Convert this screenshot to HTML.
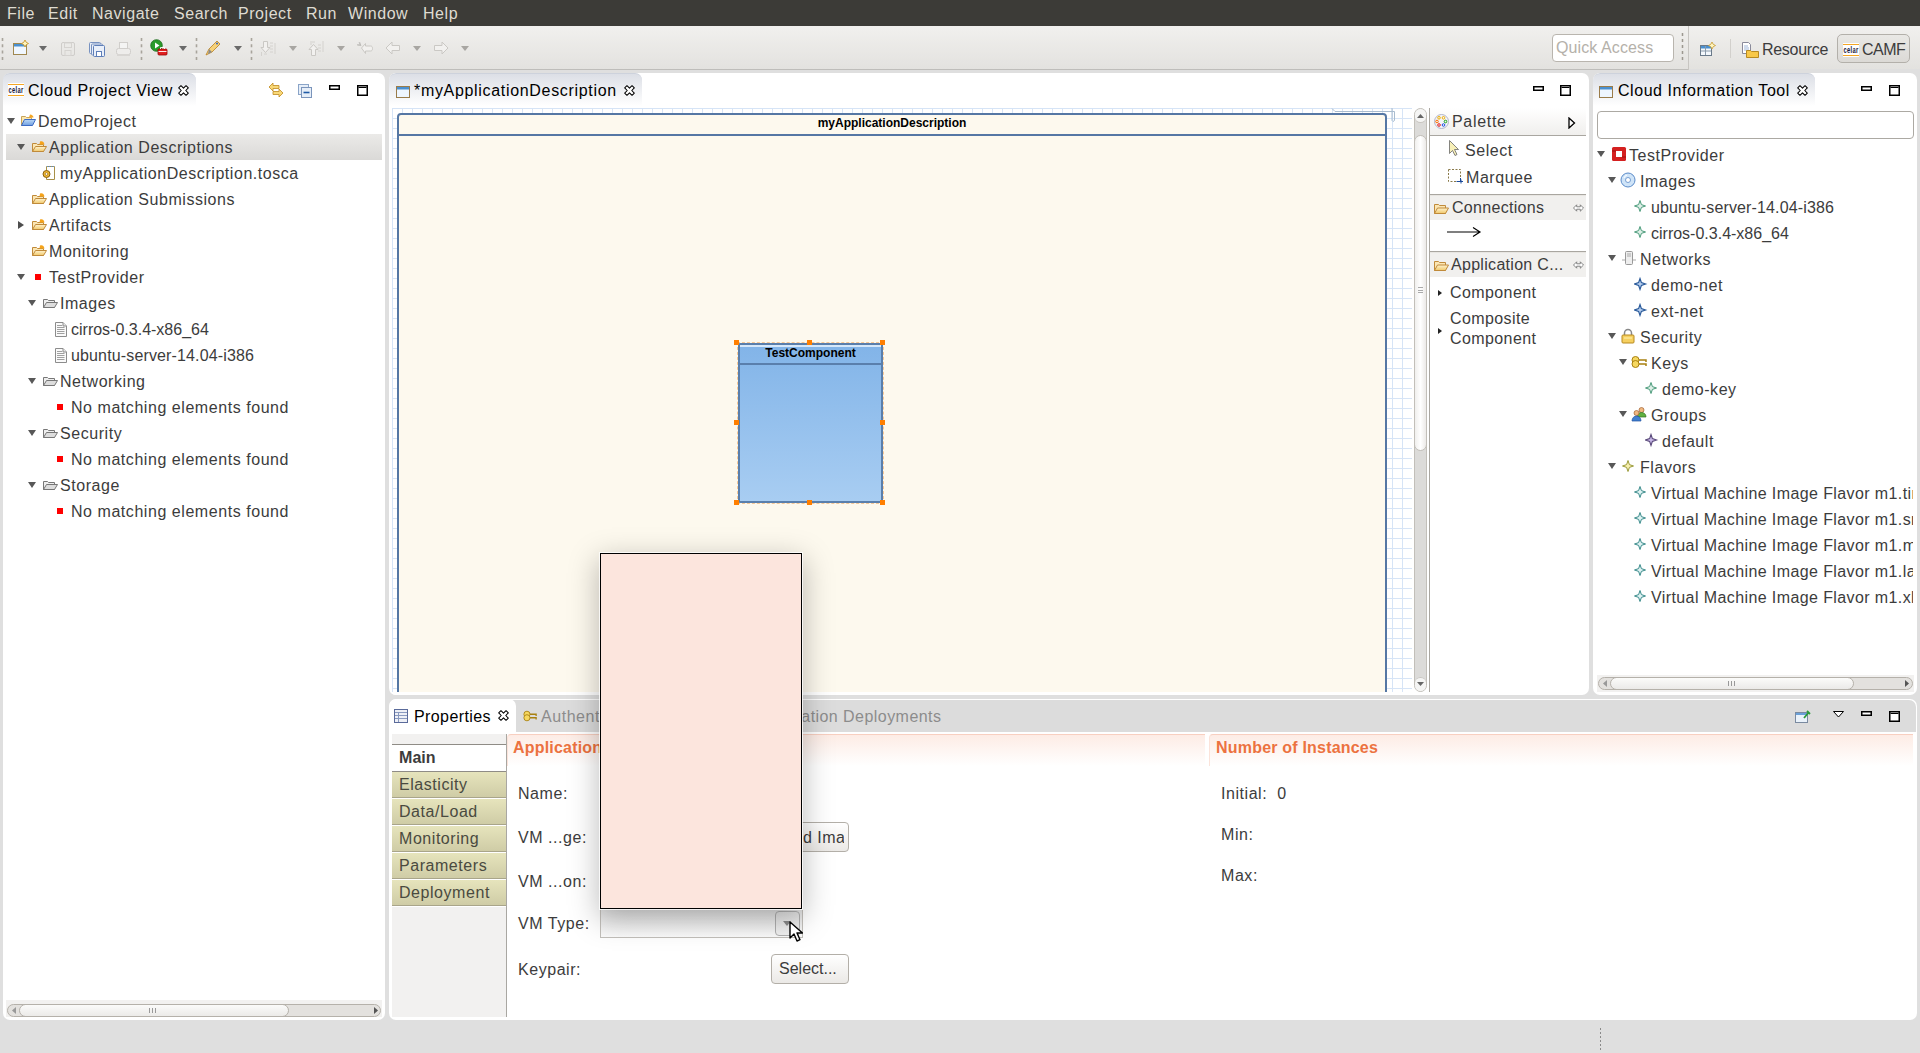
<!DOCTYPE html>
<html><head><meta charset="utf-8">
<style>
*{box-sizing:border-box;margin:0;padding:0}
html,body{width:1920px;height:1053px;overflow:hidden}
body{position:relative;background:#dfdfdf;font-family:"Liberation Sans",sans-serif;font-size:16px;letter-spacing:0.55px;color:#3c3c3c}
.a{position:absolute}
.t{position:absolute;white-space:nowrap;line-height:20px}
#menubar{left:0;top:0;width:1920px;height:26px;background:#3c3b37}
#menubar span{position:absolute;top:4px;color:#dfdbd2;line-height:20px}
#toolbar{left:0;top:26px;width:1920px;height:44px;background:linear-gradient(#f1f0ee,#e3e2df);border-bottom:1px solid #bebdba}
.panel{position:absolute;background:#fff;border-radius:7px}
.tabhdr{position:absolute;left:0;top:0;height:35px;border-radius:7px 7px 0 0;background:linear-gradient(#dcdfe6,#fff);border-top:1px solid #cdd2dc}
.tree .t{color:#3c3c3c}
.tw{position:absolute;width:0;height:0;border-left:5px solid transparent;border-right:5px solid transparent;border-top:8px solid #4a4a4a}
.tr{position:absolute;width:0;height:0;border-top:5px solid transparent;border-bottom:5px solid transparent;border-left:8px solid #4a4a4a}
.minbtn{position:absolute;width:11px;height:5px;border:2px solid #000}
.maxbtn{position:absolute;width:11px;height:11px;border:2px solid #000;border-top-width:3px}
</style></head><body>
<svg width="0" height="0" style="position:absolute">
<defs>
<linearGradient id="gy" x1="0" y1="0" x2="0" y2="1"><stop offset="0" stop-color="#fff3cf"/><stop offset="1" stop-color="#f0c86a"/></linearGradient>
<linearGradient id="gb" x1="0" y1="0" x2="0" y2="1"><stop offset="0" stop-color="#bcd8f6"/><stop offset="1" stop-color="#6f9fe0"/></linearGradient>
<symbol id="i-projfolder" viewBox="0 0 16 16"><path d="M1.5 3.5h4l1 1h5v8h-10z" fill="#fbe7b0" stroke="#c9a55a"/><path d="M10 1.5c2 0 3.5 1.5 3.5 3H9z" fill="#f5a623"/><path d="M1.5 12.5l3-6h11l-3 6z" fill="url(#gb)" stroke="#3d6bc4"/></symbol>
<symbol id="i-yfolder" viewBox="0 0 16 16"><path d="M1.5 4.5h4l1 1h6v7h-11z" fill="#fbe6b4" stroke="#c08a3a"/><path d="M9 2.5c2-1 4 0 4.5 3H8.5z" fill="#f5a31a"/><path d="M1.5 12.5l3-5h11l-3 5z" fill="url(#gy)" stroke="#c08a3a"/></symbol>
<symbol id="i-pfolder" viewBox="0 0 16 16"><path d="M1.5 3.5h4l1 1h6v8h-11z" fill="#fbe6b4" stroke="#c08a3a"/><path d="M1.5 12.5l3-5.5h11l-3 5.5z" fill="url(#gy)" stroke="#c08a3a"/></symbol>
<symbol id="i-gfolder" viewBox="0 0 16 16"><path d="M1.5 4.5h4l1 1h6v7h-11z" fill="#eee" stroke="#777"/><path d="M1.5 12.5l3-5h11l-3 5z" fill="#ddd" stroke="#777"/></symbol>
<symbol id="i-file" viewBox="0 0 16 16"><path d="M.5 1.5h7.5l3.5 3.5v10.5H.5z" fill="#fafafa" stroke="#8c8c8c"/><path d="M8 1.5v3.5h3.5" fill="#e8e8e8" stroke="#8c8c8c"/><path d="M2 4.5h5M2 6.5h7.5M2 8.5h7.5M2 10.5h7.5M2 12.5h7.5" stroke="#a0a0a0" stroke-width="1"/></symbol>
<symbol id="i-tosca" viewBox="0 0 16 16"><path d="M4.5 1.5h8v13h-8z" fill="#fff" stroke="#a89048"/><path d="M5 1.5h7" stroke="#5a8fd0" stroke-dasharray="1 1"/><circle cx="4.5" cy="9" r="3.5" fill="#f0b830" stroke="#8a6010"/><circle cx="4.5" cy="9" r="1.3" fill="#fff" stroke="#8a6010" stroke-width=".6"/></symbol>
</defs></svg>
<svg width="0" height="0" style="position:absolute"><defs>
<symbol id="i-celar" viewBox="0 0 16 14"><rect x="0" y="0" width="16" height="14" fill="#fff"/><path d="M0 1.5h16M0 12.5h16" stroke="#f5a623" stroke-width="1"/><text x="0.5" y="10" font-family="Liberation Sans" font-size="9.5" font-weight="bold" textLength="15" lengthAdjust="spacingAndGlyphs" fill="#14143a">celar</text></symbol>
<symbol id="i-close" viewBox="0 0 11 11"><path d="M.7 2.96L2.96.7 5.5 3.24 8.04.7 10.3 2.96 7.76 5.5 10.3 8.04 8.04 10.3 5.5 7.76 2.96 10.3 .7 8.04 3.24 5.5z" fill="#fff" stroke="#000" stroke-width="1.05" stroke-linejoin="round"/></symbol>
<symbol id="i-min" viewBox="0 0 11 5"><rect x=".75" y=".75" width="9.5" height="3.5" fill="#fff" stroke="#000" stroke-width="1.5"/></symbol>
<symbol id="i-max" viewBox="0 0 11 11"><rect x=".75" y=".75" width="9.5" height="9.5" fill="#fff" stroke="#000" stroke-width="1.5"/><path d="M1.5 2.5h8" stroke="#000" stroke-width="1"/></symbol>
<symbol id="i-sync" viewBox="0 0 16 16"><path d="M1 5l4-4v2.5h6v3H5V9z" fill="#f8d878" stroke="#c08a20" stroke-width=".8"/><path d="M15 11l-4-4v2.5H5v3h6V15z" fill="#f8d878" stroke="#c08a20" stroke-width=".8"/></symbol>
<symbol id="i-collapse" viewBox="0 0 14 14"><rect x=".5" y=".5" width="10" height="10" fill="#e6eef8" stroke="#8aa4c8"/><rect x="3.5" y="3.5" width="10" height="10" fill="#e6eef8" stroke="#7a94bb"/><path d="M5.5 8.5h6" stroke="#1f5aa6" stroke-width="1.6"/></symbol>
<symbol id="i-win" viewBox="0 0 14 12"><rect x=".5" y=".5" width="13" height="11" fill="#eef6ff" stroke="#9a7c4a"/><rect x="1" y="1" width="12" height="2.5" fill="#4a90d0"/></symbol>
</defs></svg>
<svg width="0" height="0" style="position:absolute"><defs>
<symbol id="i-os" viewBox="0 0 16 16"><rect x="1" y="1" width="14" height="14" rx="1.5" fill="#d42020"/><rect x="5" y="5" width="6" height="6" fill="#fff"/><path d="M1 5h4M11 11h4" stroke="#a01010"/></symbol>
<symbol id="i-disc" viewBox="0 0 16 16"><circle cx="8" cy="8" r="7" fill="#cfe4f8" stroke="#5a8ac8"/><circle cx="8" cy="8" r="2.5" fill="#fff" stroke="#5a8ac8" stroke-width=".8"/><path d="M4 6a4.5 4.5 0 0 1 3-3" stroke="#fff" fill="none"/></symbol>
<symbol id="i-net" viewBox="0 0 16 16"><rect x="4.5" y="1.5" width="7" height="13" rx="1" fill="#eee" stroke="#999"/><path d="M6 4h4M6 6h4M1 10h3M12 10h3" stroke="#aaa"/></symbol>
<symbol id="i-lock" viewBox="0 0 16 16"><path d="M4.5 7V5a3.5 3.5 0 0 1 7 0v2" fill="none" stroke="#888" stroke-width="1.5"/><rect x="2" y="7" width="12" height="8" rx="1" fill="#f6d060" stroke="#b88a20"/><path d="M4 10h8" stroke="#fff2b0"/></symbol>
<symbol id="i-keys" viewBox="0 0 16 16"><circle cx="4.5" cy="6" r="3.5" fill="#f6d860" stroke="#a88010"/><circle cx="4.5" cy="10" r="3.5" fill="#f6d860" stroke="#a88010"/><path d="M8 6h7v2M8 10h7v2" stroke="#a88010" stroke-width="1.5" fill="none"/></symbol>
<symbol id="i-groups" viewBox="0 0 16 16"><circle cx="10.5" cy="4" r="2.5" fill="#f0b880" stroke="#a06030" stroke-width=".7"/><path d="M6 11c0-3 2-4.5 4.5-4.5S15 8 15 11z" fill="#60b040" stroke="#307020" stroke-width=".7"/><circle cx="5.5" cy="7" r="2.5" fill="#f0b880" stroke="#a06030" stroke-width=".7"/><path d="M1 15c0-3 2-5 4.5-5S10 12 10 15z" fill="#4080d0" stroke="#2050a0" stroke-width=".7"/></symbol>
<symbol id="i-spk-g" viewBox="0 0 16 16"><path d="M6 2.5l1.4 4.1 4.1 1.4-4.1 1.4L6 13.5l-1.4-4.1L.5 8l4.1-1.4z" fill="#dff0e8" stroke="#4a9a7a"/></symbol>
<symbol id="i-spk-b" viewBox="0 0 16 16"><path d="M6 2.5l1.4 4.1 4.1 1.4-4.1 1.4L6 13.5l-1.4-4.1L.5 8l4.1-1.4z" fill="#b8d0f0" stroke="#2a5a9a" stroke-width="1.2"/></symbol>
<symbol id="i-spk-p" viewBox="0 0 16 16"><path d="M6 2.5l1.4 4.1 4.1 1.4-4.1 1.4L6 13.5l-1.4-4.1L.5 8l4.1-1.4z" fill="#c8b8e8" stroke="#5a4a7a" stroke-width="1.1"/></symbol>
<symbol id="i-spk-y" viewBox="0 0 16 16"><path d="M6 2.5l1.4 4.1 4.1 1.4-4.1 1.4L6 13.5l-1.4-4.1L.5 8l4.1-1.4z" fill="#f8f0b0" stroke="#9a9a3a"/></symbol>
<symbol id="i-spk-t" viewBox="0 0 16 16"><path d="M6 2.5l1.4 4.1 4.1 1.4-4.1 1.4L6 13.5l-1.4-4.1L.5 8l4.1-1.4z" fill="#e0f4f4" stroke="#3a8a8a"/></symbol>
</defs></svg>

<div id="menubar" class="a">
<span style="left:7px">File</span><span style="left:48px">Edit</span><span style="left:92px">Navigate</span><span style="left:174px">Search</span><span style="left:238px">Project</span><span style="left:306px">Run</span><span style="left:348px">Window</span><span style="left:423px">Help</span>
</div>
<div id="toolbar" class="a">
<svg class="a" style="left:1px;top:12px" width="3" height="22"><path d="M1.5 0v22" stroke="#a8a49c" stroke-width="1.6" stroke-dasharray="3 3.3"/></svg>
<svg class="a" style="left:140px;top:12px" width="3" height="22"><path d="M1.5 0v22" stroke="#a8a49c" stroke-width="1.6" stroke-dasharray="3 3.3"/></svg>
<svg class="a" style="left:195px;top:12px" width="3" height="22"><path d="M1.5 0v22" stroke="#a8a49c" stroke-width="1.6" stroke-dasharray="3 3.3"/></svg>
<svg class="a" style="left:250px;top:12px" width="3" height="22"><path d="M1.5 0v22" stroke="#a8a49c" stroke-width="1.6" stroke-dasharray="3 3.3"/></svg>
<!-- new -->
<svg class="a" style="left:12px;top:14px" width="17" height="16"><rect x="1.5" y="3.5" width="13" height="11" fill="#f0f7ff" stroke="#a08850"/><rect x="2" y="4" width="12" height="2.5" fill="#4a90d0"/><path d="M13 0l1.2 2.3 2.3 1.2-2.3 1.2L13 7l-1.2-2.3L9.5 3.5l2.3-1.2z" fill="#fff6c0" stroke="#c89a30" stroke-width=".9"/></svg>
<svg class="a" style="left:39px;top:20px" width="8" height="5"><path d="M0 0h8L4 5z" fill="#6a6a6a"/></svg>
<!-- save disabled -->
<svg class="a" style="left:60px;top:15px" width="16" height="16"><rect x="1.5" y="1.5" width="13" height="13" rx="1.5" fill="none" stroke="#cfcdca"/><rect x="4.5" y="2" width="7" height="4.5" fill="none" stroke="#d5d3d0"/><rect x="5" y="9.5" width="6" height="5" fill="none" stroke="#d5d3d0"/></svg>
<!-- save all -->
<svg class="a" style="left:88px;top:15px" width="17" height="16"><rect x="1.5" y="1.5" width="11" height="11" rx="1" fill="#e8eef8" stroke="#7892c0"/><rect x="3.5" y="3" width="11" height="11" rx="1" fill="#e8eef8" stroke="#7892c0"/><rect x="5.5" y="4.5" width="11" height="11" rx="1" fill="#eaf0fa" stroke="#5f7fb8"/><rect x="8.5" y="10.5" width="5" height="5" fill="#fff" stroke="#5f7fb8"/></svg>
<!-- print disabled -->
<svg class="a" style="left:115px;top:15px" width="17" height="16"><rect x="4.5" y="1.5" width="8" height="7" fill="#f4f4f3" stroke="#d0cecb"/><rect x="1.5" y="7.5" width="14" height="6" rx="2" fill="#eeedeb" stroke="#d0cecb"/><rect x="2" y="13" width="13" height="2" fill="#d8d6d3"/></svg>
<!-- run ext -->
<svg class="a" style="left:150px;top:13px" width="18" height="17"><circle cx="6.5" cy="6.5" r="5.8" fill="#2a9a2a" stroke="#1a6a1a" stroke-width=".8"/><path d="M5 3.5v6l4.5-3z" fill="#fff"/><rect x="8" y="10" width="9" height="6" rx="1" fill="#e02020" stroke="#900" stroke-width=".8"/><path d="M10.5 10v-1.5h4V10M8.5 12.5h8" stroke="#fff" stroke-width=".9" fill="none"/></svg>
<svg class="a" style="left:179px;top:20px" width="8" height="5"><path d="M0 0h8L4 5z" fill="#6a6a6a"/></svg>
<!-- pen -->
<svg class="a" style="left:205px;top:14px" width="17" height="16"><path d="M1 15l3-6 8-8 3 3-8 8z" fill="#f6d27a" stroke="#c08a30" stroke-width=".9"/><path d="M4 9l3 3-4 2z" fill="#8a8a8a"/><circle cx="12" cy="3.5" r="1" fill="#3060c0"/></svg>
<svg class="a" style="left:234px;top:20px" width="8" height="5"><path d="M0 0h8L4 5z" fill="#6a6a6a"/></svg>
<!-- next annot -->
<svg class="a" style="left:260px;top:14px" width="16" height="17"><path d="M3.5 1.5h4v6h2.5l-4.5 5-4.5-5h2.5z" fill="#f2f1ef" stroke="#cac8c4"/><path d="M10 3h3M10 6h3M10 9h3M10 12h3M15 3v11M1.5 12v4M4 14h3" stroke="#d4d2ce"/></svg>
<svg class="a" style="left:289px;top:20px" width="8" height="5"><path d="M0 0h8L4 5z" fill="#a8a6a2"/></svg>
<!-- prev annot -->
<svg class="a" style="left:308px;top:14px" width="16" height="17"><path d="M5.5 15.5h-4v-6H-1l4.5-5 4.5 5H5.5z" transform="translate(2 0)" fill="#f2f1ef" stroke="#cac8c4"/><path d="M10 5h3M10 8h3M10 11h3M15 1v11M3 1v4M4 2h3" stroke="#d4d2ce"/></svg>
<svg class="a" style="left:337px;top:20px" width="8" height="5"><path d="M0 0h8L4 5z" fill="#a8a6a2"/></svg>
<!-- last edit -->
<svg class="a" style="left:356px;top:15px" width="18" height="14"><path d="M1.5 3l2 2M4 1.5v3M1 4h4M3 1l2 4" stroke="#b8b6b2" stroke-width=".8"/><path d="M5.5 7l4-4.5v2.5h5c1.5 0 2 1 2 2.5s-.5 2.5-2 2.5h-5v2.5z" fill="#f2f1ef" stroke="#cac8c4"/></svg>
<!-- back -->
<svg class="a" style="left:385px;top:15px" width="16" height="14"><path d="M1 7l6-6v3.5h7.5v5H7V13z" fill="#f2f1ef" stroke="#cac8c4"/></svg>
<svg class="a" style="left:413px;top:20px" width="8" height="5"><path d="M0 0h8L4 5z" fill="#a8a6a2"/></svg>
<!-- fwd -->
<svg class="a" style="left:433px;top:15px" width="16" height="14"><path d="M15 7L9 1v3.5H1.5v5H9V13z" fill="#f2f1ef" stroke="#cac8c4"/></svg>
<svg class="a" style="left:461px;top:20px" width="8" height="5"><path d="M0 0h8L4 5z" fill="#a8a6a2"/></svg>

<!-- right side -->
<div class="a" style="left:1552px;top:8px;width:122px;height:28px;background:#fff;border:1px solid #b9b5ae;border-radius:4px"></div>
<div class="t" style="left:1556px;top:11px;color:#b5b1aa;letter-spacing:0.1px;line-height:22px">Quick Access</div>
<svg class="a" style="left:1681px;top:7px" width="3" height="30"><path d="M1.5 0v30" stroke="#9c9890" stroke-width="1.5" stroke-dasharray="3 3"/></svg>
<div class="a" style="left:1688px;top:0;width:1px;height:44px;background:#c8c6c2"></div>
<div class="a" style="left:1689px;top:43px;width:231px;height:2px;background:#dfdfdf"></div>
<svg class="a" style="left:1700px;top:16px" width="16" height="15"><rect x=".5" y="3.5" width="11" height="10" fill="#f4f8fc" stroke="#6a7a8a"/><rect x="1" y="4" width="10" height="2.5" fill="#4a90d0"/><path d="M5.5 4v9M1 9h10" stroke="#8a9aaa"/><path d="M12 0l1.2 2.3 2.3 1.2-2.3 1.2L12 7l-1.2-2.3L8.5 3.5l2.3-1.2z" fill="#fff6c0" stroke="#c89a30" stroke-width=".8"/></svg>
<div class="a" style="left:1730px;top:13px;width:1px;height:19px;background:#d2d0cc"></div>
<svg class="a" style="left:1742px;top:16px" width="17" height="16"><path d="M.5 .5h6l2 2v9h-8z" fill="#fff" stroke="#8a8a9a"/><path d="M2 4h4M2 6h5M2 8h5" stroke="#7a9ac8" stroke-width=".7"/><path d="M4.5 8.5h4l1 1h7v6h-12z" fill="#f8c848" stroke="#b88a20"/></svg>
<div class="t" style="left:1762px;top:12px;color:#3c3c3c;line-height:24px;letter-spacing:-0.3px">Resource</div>
<div class="a" style="left:1837px;top:8px;width:73px;height:29px;border:1px solid #b3b0aa;border-radius:5px;background:linear-gradient(#e9e8e5,#dcdad6)"></div>
<svg class="a" style="left:1843px;top:17px" width="16" height="14"><use href="#i-celar"/></svg>
<div class="t" style="left:1862px;top:12px;color:#3c3c3c;line-height:24px;letter-spacing:-0.5px">CAMF</div>
</div>


<!-- LEFT PANEL -->
<div class="panel" id="left" style="left:3px;top:73px;width:382px;height:947px">
<div class="tabhdr" style="width:193px;height:33px"></div>
<svg class="a" style="left:5px;top:10px" width="16" height="14"><use href="#i-celar"/></svg>
<div class="t" style="left:25px;top:7px;color:#000;line-height:22px">Cloud Project View</div>
<svg class="a" style="left:175px;top:12px" width="11" height="11"><use href="#i-close"/></svg>
<svg class="a" style="left:265px;top:9px" width="16" height="16"><use href="#i-sync"/></svg>
<svg class="a" style="left:295px;top:11px" width="14" height="14"><use href="#i-collapse"/></svg>
<svg class="a" style="left:326px;top:12px" width="11" height="5"><use href="#i-min"/></svg>
<svg class="a" style="left:354px;top:12px" width="11" height="11"><use href="#i-max"/></svg>
<div class="a" style="left:3px;top:61px;width:376px;height:26px;background:linear-gradient(#ebeae8,#dad9d7)"></div>
<div class="tree a" style="left:0;top:1px">
<svg class="a" style="left:4px;top:44px" width="8" height="6"><path d="M0 0H8L4 6Z" fill="#585858"/></svg>
<svg class="a" style="left:17px;top:39px" width="16" height="16"><use href="#i-projfolder"/></svg>
<div class="t" style="left:35px;top:35px;line-height:26px">DemoProject</div>
<svg class="a" style="left:14px;top:70px" width="8" height="6"><path d="M0 0H8L4 6Z" fill="#585858"/></svg>
<svg class="a" style="left:28px;top:65px" width="16" height="16"><use href="#i-yfolder"/></svg>
<div class="t" style="left:46px;top:61px;line-height:26px">Application Descriptions</div>
<svg class="a" style="left:39px;top:91px" width="16" height="16"><use href="#i-tosca"/></svg>
<div class="t" style="left:57px;top:87px;line-height:26px">myApplicationDescription.tosca</div>
<svg class="a" style="left:28px;top:117px" width="16" height="16"><use href="#i-yfolder"/></svg>
<div class="t" style="left:46px;top:113px;line-height:26px">Application Submissions</div>
<svg class="a" style="left:15px;top:147px" width="6" height="8"><path d="M0 0V8L6 4Z" fill="#4d4d4d"/></svg>
<svg class="a" style="left:28px;top:143px" width="16" height="16"><use href="#i-yfolder"/></svg>
<div class="t" style="left:46px;top:139px;line-height:26px">Artifacts</div>
<svg class="a" style="left:28px;top:169px" width="16" height="16"><use href="#i-yfolder"/></svg>
<div class="t" style="left:46px;top:165px;line-height:26px">Monitoring</div>
<svg class="a" style="left:14px;top:200px" width="8" height="6"><path d="M0 0H8L4 6Z" fill="#585858"/></svg>
<div class="a" style="left:32px;top:200px;width:6px;height:6px;background:#f00"></div>
<div class="t" style="left:46px;top:191px;line-height:26px">TestProvider</div>
<svg class="a" style="left:25px;top:226px" width="8" height="6"><path d="M0 0H8L4 6Z" fill="#585858"/></svg>
<svg class="a" style="left:39px;top:221px" width="16" height="16"><use href="#i-gfolder"/></svg>
<div class="t" style="left:57px;top:217px;line-height:26px">Images</div>
<svg class="a" style="left:52px;top:247px" width="16" height="16"><use href="#i-file"/></svg>
<div class="t" style="left:68px;top:243px;line-height:26px;letter-spacing:0px">cirros-0.3.4-x86_64</div>
<svg class="a" style="left:52px;top:273px" width="16" height="16"><use href="#i-file"/></svg>
<div class="t" style="left:68px;top:269px;line-height:26px;letter-spacing:0.14px">ubuntu-server-14.04-i386</div>
<svg class="a" style="left:25px;top:304px" width="8" height="6"><path d="M0 0H8L4 6Z" fill="#585858"/></svg>
<svg class="a" style="left:39px;top:299px" width="16" height="16"><use href="#i-gfolder"/></svg>
<div class="t" style="left:57px;top:295px;line-height:26px">Networking</div>
<div class="a" style="left:54px;top:330px;width:6px;height:6px;background:#f00"></div>
<div class="t" style="left:68px;top:321px;line-height:26px">No matching elements found</div>
<svg class="a" style="left:25px;top:356px" width="8" height="6"><path d="M0 0H8L4 6Z" fill="#585858"/></svg>
<svg class="a" style="left:39px;top:351px" width="16" height="16"><use href="#i-gfolder"/></svg>
<div class="t" style="left:57px;top:347px;line-height:26px">Security</div>
<div class="a" style="left:54px;top:382px;width:6px;height:6px;background:#f00"></div>
<div class="t" style="left:68px;top:373px;line-height:26px">No matching elements found</div>
<svg class="a" style="left:25px;top:408px" width="8" height="6"><path d="M0 0H8L4 6Z" fill="#585858"/></svg>
<svg class="a" style="left:39px;top:403px" width="16" height="16"><use href="#i-gfolder"/></svg>
<div class="t" style="left:57px;top:399px;line-height:26px">Storage</div>
<div class="a" style="left:54px;top:434px;width:6px;height:6px;background:#f00"></div>
<div class="t" style="left:68px;top:425px;line-height:26px">No matching elements found</div>
</div>
<div class="a" style="left:3px;top:927px;width:376px;height:17px;background:#f2f1f0"></div>
<div class="a" style="left:4px;top:931px;width:374px;height:13px;border:1px solid #b5b1aa;border-radius:7px;background:#e3e1de"></div>
<div class="a" style="left:16px;top:931px;width:270px;height:13px;border:1px solid #b5b1aa;border-radius:7px;background:linear-gradient(#fbfbfa,#ebeae8)"></div>
<svg class="a" style="left:9px;top:934px" width="4" height="7"><path d="M4 0V7L0 3.5Z" fill="#999"/></svg>
<svg class="a" style="left:371px;top:934px" width="4" height="7"><path d="M0 0V7L4 3.5Z" fill="#555"/></svg>
<div class="a" style="left:146px;top:935px;width:7px;height:5px;border-left:1px solid #999;border-right:1px solid #999"><div class="a" style="left:2px;top:0;width:1px;height:5px;background:#999"></div></div>
</div>

<!-- EDITOR -->
<div class="panel" id="editor" style="left:389px;top:73px;width:1200px;height:622px;overflow:hidden">
<div class="tabhdr" style="width:253px;height:33px"></div>
<svg class="a" style="left:7px;top:13px" width="14" height="12"><use href="#i-win"/></svg>
<div class="t" style="left:25px;top:7px;color:#000;line-height:22px;letter-spacing:0.68px">*myApplicationDescription</div>
<svg class="a" style="left:235px;top:12px" width="11" height="11"><use href="#i-close"/></svg>
<svg class="a" style="left:1144px;top:13px" width="11" height="5"><use href="#i-min"/></svg>
<svg class="a" style="left:1171px;top:12px" width="11" height="11"><use href="#i-max"/></svg>
<!-- canvas grid -->
<div class="a" style="left:3px;top:35px;width:1020px;height:584px;background-color:#fff;background-image:linear-gradient(90deg,#d6e4f6 1px,transparent 1px),linear-gradient(#d6e4f6 1px,transparent 1px);background-size:10px 10px"></div>
<!-- diagram frame -->
<div class="a" style="left:8px;top:40px;width:990px;height:600px;background:#fdf9ee;border:2px solid #5577a4;border-radius:4px"></div>
<div class="a" style="left:8px;top:61px;width:990px;height:2px;background:#5577a4"></div>
<div class="t" style="left:8px;top:41px;width:990px;text-align:center;font-weight:bold;font-size:12px;letter-spacing:0;color:#000;line-height:18px">myApplicationDescription</div>
<!-- notch -->
<svg class="a" style="left:940px;top:35px" width="66" height="14"><path d="M3 .5l3 3h59.5v9l-1.5 1-1-1V0" stroke="#a9bccf" fill="none"/></svg>
<!-- component -->
<div class="a" style="left:349px;top:270px;width:145px;height:160px;background:linear-gradient(#82b4e8,#a8cdf2);border:2px solid #5a7fac;border-radius:2px"></div>
<div class="a" style="left:351px;top:272px;width:141px;height:2px;background:#d6e8fa"></div>
<div class="a" style="left:349px;top:290px;width:145px;height:2px;background:#5a7fac"></div>
<div class="t" style="left:349px;top:271px;width:145px;text-align:center;font-weight:bold;font-size:12px;letter-spacing:0;color:#000;line-height:18px">TestComponent</div>
<div class="a" style="left:348px;top:269px;width:147px;height:162px;border:1px dashed rgba(240,160,80,.55)"></div>
<div class="a" style="left:345px;top:267px;width:5px;height:5px;background:#ff7f00"></div>
<div class="a" style="left:418px;top:267px;width:5px;height:5px;background:#ff7f00"></div>
<div class="a" style="left:491px;top:267px;width:5px;height:5px;background:#ff7f00"></div>
<div class="a" style="left:345px;top:347px;width:5px;height:5px;background:#ff7f00"></div>
<div class="a" style="left:491px;top:347px;width:5px;height:5px;background:#ff7f00"></div>
<div class="a" style="left:345px;top:427px;width:5px;height:5px;background:#ff7f00"></div>
<div class="a" style="left:418px;top:427px;width:5px;height:5px;background:#ff7f00"></div>
<div class="a" style="left:491px;top:427px;width:5px;height:5px;background:#ff7f00"></div>
<div class="a" style="left:0;top:619px;width:1040px;height:3px;background:#fff"></div>
<!-- vscroll -->
<div class="a" style="left:1025px;top:35px;width:13px;height:584px;border:1px solid #c2bfb9;border-radius:7px;background:#dcdbd9;overflow:hidden">
<div class="a" style="left:0;top:0;width:11px;height:14px;background:#f5f5f4;border-bottom:1px solid #c8c5c0;border-radius:0 0 6px 6px"></div>
<div class="a" style="left:-1px;top:26px;width:13px;height:316px;border:1px solid #c2bfb9;border-radius:7px;background:linear-gradient(90deg,#f0efed,#fff 50%,#eceae8)"></div>
<div class="a" style="left:0;bottom:0;width:11px;height:14px;background:#f5f5f4;border-top:1px solid #c8c5c0;border-radius:6px 6px 0 0"></div>
</div>
<svg class="a" style="left:1028px;top:41px" width="7" height="5"><path d="M0 4h7L3.5 0z" fill="#666"/></svg>
<svg class="a" style="left:1028px;top:609px" width="7" height="5"><path d="M0 0h7L3.5 4z" fill="#666"/></svg>
<div class="a" style="left:1029px;top:214px;width:5px;height:6px;border-top:1px solid #aaa;border-bottom:1px solid #aaa"><div class="a" style="left:0;top:2px;width:5px;height:1px;background:#aaa"></div></div>
<!-- palette -->
<div class="a" style="left:1040px;top:35px;width:1px;height:584px;background:#aaa7a1"></div>
<div class="a" style="left:1041px;top:35px;width:156px;height:27px;background:linear-gradient(#fff,#f0efed)"></div>
<div class="a" style="left:1041px;top:62px;width:156px;height:1px;background:#a9a6a0"></div>
<svg class="a" style="left:1045px;top:41px" width="15" height="15"><circle cx="7.5" cy="7.5" r="7" fill="#f4f4f8" stroke="#b0b4c8"/><circle cx="5" cy="3.8" r="1.3" fill="none" stroke="#f0b000"/><circle cx="9.5" cy="3.8" r="1.3" fill="none" stroke="#f0b000"/><circle cx="3" cy="7.5" r="1.3" fill="none" stroke="#ff7000"/><circle cx="11.5" cy="7.5" r="1.3" fill="none" stroke="#10a010"/><circle cx="5" cy="11" r="1.3" fill="none" stroke="#e02020"/><circle cx="9.5" cy="11" r="1.3" fill="none" stroke="#2050e0"/></svg>
<div class="t" style="left:1063px;top:38px;line-height:22px;color:#3c3c3c;letter-spacing:0.7px">Palette</div>
<svg class="a" style="left:1179px;top:44px" width="8" height="12"><path d="M1 1v10l5.5-5z" fill="#fff" stroke="#000" stroke-width="1.3"/></svg>
<svg class="a" style="left:1060px;top:67px" width="11" height="17"><path d="M.5 .5v13l3-3 2.5 5 2-1-2.5-5h4z" fill="#f8f0b8" stroke="#666" stroke-width=".8"/></svg>
<div class="t" style="left:1076px;top:67px;line-height:22px">Select</div>
<svg class="a" style="left:1059px;top:96px" width="15" height="16"><path d="M.5 .5h12v10M.5 .5v12h8" fill="none" stroke="#8a7a4a" stroke-dasharray="2 1.5"/><path d="M8.5 12.5h3M12.5 9v4" stroke="#1a4a9a" fill="none"/><path d="M11 12.5h4M13 10.5v4" stroke="#1a4a9a"/></svg>
<div class="t" style="left:1077px;top:94px;line-height:22px">Marquee</div>
<div class="a" style="left:1041px;top:121px;width:156px;height:2px;background:linear-gradient(#a9a6a0 50%,#e8e6e2 50%)"></div>
<div class="a" style="left:1041px;top:123px;width:156px;height:24px;background:#f1f0ee"></div>
<svg class="a" style="left:1044px;top:128px" width="16" height="16"><use href="#i-pfolder"/></svg>
<div class="t" style="left:1063px;top:124px;line-height:22px;letter-spacing:0.3px">Connections</div>
<svg class="a" style="left:1184px;top:131px" width="11" height="8"><path d="M.5 4l3.2-3.2v2h3.6v-2L10.5 4 7.3 7.2v-2H3.7v2z" fill="#fff" stroke="#777" stroke-width=".9" stroke-linejoin="round"/></svg>
<svg class="a" style="left:1057px;top:153px" width="36" height="12"><path d="M1 6h33M27 1.5l7 4.5-7 4.5" fill="none" stroke="#000" stroke-width="1.2"/></svg>
<div class="a" style="left:1041px;top:178px;width:156px;height:2px;background:linear-gradient(#a9a6a0 50%,#e8e6e2 50%)"></div>
<div class="a" style="left:1041px;top:180px;width:156px;height:24px;background:#f1f0ee"></div>
<svg class="a" style="left:1044px;top:185px" width="16" height="16"><use href="#i-pfolder"/></svg>
<div class="t" style="left:1062px;top:181px;line-height:22px;letter-spacing:0.3px">Application C...</div>
<svg class="a" style="left:1184px;top:188px" width="11" height="8"><path d="M.5 4l3.2-3.2v2h3.6v-2L10.5 4 7.3 7.2v-2H3.7v2z" fill="#fff" stroke="#777" stroke-width=".9" stroke-linejoin="round"/></svg>
<svg class="a" style="left:1049px;top:217px" width="4" height="6"><path d="M0 0v6l4-3z" fill="#222"/></svg>
<div class="t" style="left:1061px;top:209px;line-height:22px;letter-spacing:0.4px">Component</div>
<svg class="a" style="left:1049px;top:255px" width="4" height="6"><path d="M0 0v6l4-3z" fill="#222"/></svg>
<div class="t" style="left:1061px;top:236px;line-height:20px;letter-spacing:0.4px">Composite<br>Component</div>
</div>


<!-- RIGHT PANEL -->
<div class="panel" id="right" style="left:1593px;top:73px;width:324px;height:622px;overflow:hidden">
<div class="tabhdr" style="width:222px;height:33px"></div>
<svg class="a" style="left:6px;top:13px" width="14" height="12"><use href="#i-win"/></svg>
<div class="t" style="left:25px;top:7px;color:#000;line-height:22px">Cloud Information Tool</div>
<svg class="a" style="left:204px;top:12px" width="11" height="11"><use href="#i-close"/></svg>
<svg class="a" style="left:268px;top:13px" width="11" height="5"><use href="#i-min"/></svg>
<svg class="a" style="left:296px;top:12px" width="11" height="11"><use href="#i-max"/></svg>
<div class="a" style="left:4px;top:38px;width:317px;height:28px;border:1px solid #aca9a3;border-radius:4px;background:#fff"></div>
<div class="a" style="left:0;top:0;width:320px;height:622px;overflow:hidden">
<svg class="a" style="left:4px;top:78px" width="8" height="6"><path d="M0 0H8L4 6Z" fill="#585858"/></svg>
<svg class="a" style="left:18px;top:73px" width="16" height="16"><use href="#i-os"/></svg>
<div class="t" style="left:36px;top:70px;line-height:26px">TestProvider</div>
<svg class="a" style="left:15px;top:104px" width="8" height="6"><path d="M0 0H8L4 6Z" fill="#585858"/></svg>
<svg class="a" style="left:27px;top:99px" width="16" height="16"><use href="#i-disc"/></svg>
<div class="t" style="left:47px;top:96px;line-height:26px">Images</div>
<svg class="a" style="left:41px;top:125px" width="16" height="16"><use href="#i-spk-g"/></svg>
<div class="t" style="left:58px;top:122px;line-height:26px;letter-spacing:0.14px">ubuntu-server-14.04-i386</div>
<svg class="a" style="left:41px;top:151px" width="16" height="16"><use href="#i-spk-g"/></svg>
<div class="t" style="left:58px;top:148px;line-height:26px;letter-spacing:0px">cirros-0.3.4-x86_64</div>
<svg class="a" style="left:15px;top:182px" width="8" height="6"><path d="M0 0H8L4 6Z" fill="#585858"/></svg>
<svg class="a" style="left:28px;top:177px" width="16" height="16"><use href="#i-net"/></svg>
<div class="t" style="left:47px;top:174px;line-height:26px">Networks</div>
<svg class="a" style="left:41px;top:203px" width="16" height="16"><use href="#i-spk-b"/></svg>
<div class="t" style="left:58px;top:200px;line-height:26px">demo-net</div>
<svg class="a" style="left:41px;top:229px" width="16" height="16"><use href="#i-spk-b"/></svg>
<div class="t" style="left:58px;top:226px;line-height:26px">ext-net</div>
<svg class="a" style="left:15px;top:260px" width="8" height="6"><path d="M0 0H8L4 6Z" fill="#585858"/></svg>
<svg class="a" style="left:27px;top:255px" width="16" height="16"><use href="#i-lock"/></svg>
<div class="t" style="left:47px;top:252px;line-height:26px">Security</div>
<svg class="a" style="left:26px;top:286px" width="8" height="6"><path d="M0 0H8L4 6Z" fill="#585858"/></svg>
<svg class="a" style="left:38px;top:281px" width="16" height="16"><use href="#i-keys"/></svg>
<div class="t" style="left:58px;top:278px;line-height:26px">Keys</div>
<svg class="a" style="left:52px;top:307px" width="16" height="16"><use href="#i-spk-g"/></svg>
<div class="t" style="left:69px;top:304px;line-height:26px">demo-key</div>
<svg class="a" style="left:26px;top:338px" width="8" height="6"><path d="M0 0H8L4 6Z" fill="#585858"/></svg>
<svg class="a" style="left:38px;top:333px" width="16" height="16"><use href="#i-groups"/></svg>
<div class="t" style="left:58px;top:330px;line-height:26px">Groups</div>
<svg class="a" style="left:52px;top:359px" width="16" height="16"><use href="#i-spk-p"/></svg>
<div class="t" style="left:69px;top:356px;line-height:26px">default</div>
<svg class="a" style="left:15px;top:390px" width="8" height="6"><path d="M0 0H8L4 6Z" fill="#585858"/></svg>
<svg class="a" style="left:29px;top:385px" width="16" height="16"><use href="#i-spk-y"/></svg>
<div class="t" style="left:47px;top:382px;line-height:26px">Flavors</div>
<svg class="a" style="left:41px;top:411px" width="16" height="16"><use href="#i-spk-t"/></svg>
<div class="t" style="left:58px;top:408px;line-height:26px;letter-spacing:0.4px">Virtual Machine Image Flavor m1.tiny</div>
<svg class="a" style="left:41px;top:437px" width="16" height="16"><use href="#i-spk-t"/></svg>
<div class="t" style="left:58px;top:434px;line-height:26px;letter-spacing:0.4px">Virtual Machine Image Flavor m1.small</div>
<svg class="a" style="left:41px;top:463px" width="16" height="16"><use href="#i-spk-t"/></svg>
<div class="t" style="left:58px;top:460px;line-height:26px;letter-spacing:0.4px">Virtual Machine Image Flavor m1.medium</div>
<svg class="a" style="left:41px;top:489px" width="16" height="16"><use href="#i-spk-t"/></svg>
<div class="t" style="left:58px;top:486px;line-height:26px;letter-spacing:0.4px">Virtual Machine Image Flavor m1.large</div>
<svg class="a" style="left:41px;top:515px" width="16" height="16"><use href="#i-spk-t"/></svg>
<div class="t" style="left:58px;top:512px;line-height:26px;letter-spacing:0.4px">Virtual Machine Image Flavor m1.xlarge</div>
</div>
<div class="a" style="left:4px;top:602px;width:317px;height:17px;background:#f2f1f0"></div>
<div class="a" style="left:5px;top:604px;width:315px;height:13px;border:1px solid #b5b1aa;border-radius:7px;background:#e3e1de"></div>
<div class="a" style="left:17px;top:604px;width:244px;height:13px;border:1px solid #b5b1aa;border-radius:7px;background:linear-gradient(#fbfbfa,#ebeae8)"></div>
<svg class="a" style="left:10px;top:607px" width="4" height="7"><path d="M4 0V7L0 3.5Z" fill="#999"/></svg>
<svg class="a" style="left:312px;top:607px" width="4" height="7"><path d="M0 0V7L4 3.5Z" fill="#555"/></svg>
<div class="a" style="left:135px;top:608px;width:7px;height:5px;border-left:1px solid #999;border-right:1px solid #999"><div class="a" style="left:2px;top:0;width:1px;height:5px;background:#999"></div></div>
</div>

<!-- PROPERTIES -->
<div class="panel" id="props" style="left:389px;top:699px;width:1528px;height:321px;overflow:hidden;background:#fff">
<div class="a" style="left:1px;top:1px;width:1526px;height:32px;background:#dcdcdc;border-radius:7px 7px 0 0"></div>
<div class="a" style="left:0;top:0;width:127px;height:33px;background:#fff;border-radius:7px 7px 0 0"></div>
<svg class="a" style="left:5px;top:10px" width="14" height="14"><rect x=".5" y=".5" width="13" height="13" fill="#eef0f6" stroke="#5a6a9a"/><path d="M1 3.5h12M1 6.5h12M1 9.5h12M4.5 3v10" stroke="#8a9ac0"/></svg>
<div class="t" style="left:25px;top:7px;color:#000;line-height:22px;letter-spacing:0.4px">Properties</div>
<svg class="a" style="left:109px;top:11px" width="11" height="11"><use href="#i-close"/></svg>
<svg class="a" style="left:133px;top:10px" width="16" height="14"><use href="#i-keys"/></svg>
<div class="t" style="left:152px;top:7px;color:#8c8c8c;line-height:22px">Authentication</div>
<div class="t" style="left:366px;top:7px;color:#8c8c8c;line-height:22px;letter-spacing:0.45px">Application Deployments</div>
<svg class="a" style="left:1406px;top:10px" width="16" height="15"><rect x=".5" y="3.5" width="12" height="10" fill="#eaf2fa" stroke="#7a8aa0"/><rect x="1" y="4" width="11" height="2" fill="#6aa0d8"/><path d="M9 9l5-6M12 2l3 3" stroke="#2a9a3a" stroke-width="1.8"/></svg>
<svg class="a" style="left:1444px;top:12px" width="11" height="7"><path d="M.5 .5h10L5.5 6z" fill="#fff" stroke="#000" stroke-width="1"/></svg>
<svg class="a" style="left:1472px;top:12px" width="11" height="5"><use href="#i-min"/></svg>
<svg class="a" style="left:1500px;top:12px" width="11" height="11"><use href="#i-max"/></svg>
<!-- left tab list -->
<div class="a" style="left:3px;top:35px;width:115px;height:283px;background:#f2f1f0;border-right:1px solid #a9a7a2"></div>
<div class="a" style="left:3px;top:45px;width:114px;height:1px;background:#8f8c86"></div>
<div class="a" style="left:3px;top:46px;width:114px;height:26px;background:#fff"></div>
<div class="t" style="left:10px;top:47px;line-height:24px;font-weight:bold;letter-spacing:0.05px;color:#3c3c3c">Main</div>
<div class="a" style="left:3px;top:72px;width:114px;height:1px;background:#8f8c86"></div>
<div class="a" style="left:3px;top:73px;width:114px;height:26px;background:linear-gradient(#e6e4bc,#cfcca6);border-bottom:1px solid #a9a58a"></div>
<div class="a" style="left:3px;top:99px;width:114px;height:1px;background:#fff"></div>
<div class="t" style="left:10px;top:74px;line-height:24px;color:#4a4a40">Elasticity</div>
<div class="a" style="left:3px;top:100px;width:114px;height:26px;background:linear-gradient(#e6e4bc,#cfcca6);border-bottom:1px solid #a9a58a"></div>
<div class="a" style="left:3px;top:126px;width:114px;height:1px;background:#fff"></div>
<div class="t" style="left:10px;top:101px;line-height:24px;color:#4a4a40">Data/Load</div>
<div class="a" style="left:3px;top:127px;width:114px;height:26px;background:linear-gradient(#e6e4bc,#cfcca6);border-bottom:1px solid #a9a58a"></div>
<div class="a" style="left:3px;top:153px;width:114px;height:1px;background:#fff"></div>
<div class="t" style="left:10px;top:128px;line-height:24px;color:#4a4a40">Monitoring</div>
<div class="a" style="left:3px;top:154px;width:114px;height:26px;background:linear-gradient(#e6e4bc,#cfcca6);border-bottom:1px solid #a9a58a"></div>
<div class="a" style="left:3px;top:180px;width:114px;height:1px;background:#fff"></div>
<div class="t" style="left:10px;top:155px;line-height:24px;color:#4a4a40">Parameters</div>
<div class="a" style="left:3px;top:181px;width:114px;height:26px;background:linear-gradient(#e6e4bc,#cfcca6);border-bottom:1px solid #a9a58a"></div>
<div class="a" style="left:3px;top:207px;width:114px;height:1px;background:#fff"></div>
<div class="t" style="left:10px;top:182px;line-height:24px;color:#4a4a40">Deployment</div>
<!-- sections -->
<div class="a" style="left:118px;top:35px;width:698px;height:32px;background:linear-gradient(#fdece5,#fff);border-top:1px solid #f8cfc0;border-left:1px solid #fbe3da;border-radius:4px 0 0 0"></div>
<div class="t" style="left:124px;top:37px;line-height:24px;font-weight:bold;color:#ec7240;letter-spacing:0.2px">Application Details</div>
<div class="a" style="left:820px;top:35px;width:704px;height:32px;background:linear-gradient(#fdece5,#fff);border-top:1px solid #f8cfc0;border-left:1px solid #fbe3da;border-radius:4px 0 0 0"></div>
<div class="t" style="left:827px;top:37px;line-height:24px;font-weight:bold;color:#ec7240;letter-spacing:0.2px">Number of Instances</div>
<div class="t" style="left:129px;top:83px;line-height:24px">Name:</div>
<div class="t" style="left:129px;top:127px;line-height:24px">VM ...ge:</div>
<div class="t" style="left:129px;top:171px;line-height:24px">VM ...on:</div>
<div class="t" style="left:129px;top:213px;line-height:24px">VM Type:</div>
<div class="t" style="left:129px;top:259px;line-height:24px">Keypair:</div>
<div class="a" style="left:381px;top:123px;width:79px;height:30px;border:1px solid #b3afa8;border-radius:4px;background:linear-gradient(#fff,#ebe9e6);overflow:hidden"><div class="a" style="left:0;top:0;width:73px;height:28px;overflow:hidden"><div class="t" style="left:32px;top:4px;line-height:22px;letter-spacing:0.5px">d Image</div></div></div>
<div class="a" style="left:382px;top:255px;width:78px;height:30px;border:1px solid #b3afa8;border-radius:4px;background:linear-gradient(#fff,#ebe9e6)"></div>
<div class="t" style="left:390px;top:259px;line-height:22px;letter-spacing:0px">Select...</div>
<!-- combo -->
<div class="a" style="left:211px;top:210px;width:203px;height:29px;border:1px solid #c2bfba;border-top:none;background:linear-gradient(#e2e2e2,#fbfbfb)"></div>
<div class="a" style="left:386px;top:212px;width:25px;height:25px;border:1px solid #b0b0b0;border-radius:4px;background:linear-gradient(#e4e4e4,#f2f2f2)"></div>
<svg class="a" style="left:394px;top:222px" width="8" height="5"><path d="M0 0h8L4 5z" fill="#888"/></svg>
<div class="t" style="left:832px;top:83px;line-height:24px">Initial:&nbsp;&nbsp;0</div>
<div class="t" style="left:832px;top:124px;line-height:24px">Min:</div>
<div class="t" style="left:832px;top:165px;line-height:24px">Max:</div>
</div>

<!-- POPUP -->
<div class="a" style="left:600px;top:553px;width:202px;height:356px;background:#fce5dd;border:1px solid #000;box-shadow:0 0 0 1px rgba(255,255,255,.8), 0 8px 28px 2px rgba(0,0,0,0.26)"></div>
<svg class="a" style="left:789px;top:921px" width="14" height="22"><path d="M1 1v16l4-4 3 7 3-1.3-3-6.7h5.5z" fill="#fff" stroke="#000" stroke-width="1.4" stroke-linejoin="round"/></svg>
<!-- status bar -->
<svg class="a" style="left:1599px;top:1028px" width="3" height="22"><path d="M1.5 0v22" stroke="#8a8a8a" stroke-width="1" stroke-dasharray="2 2"/></svg>

</body></html>
